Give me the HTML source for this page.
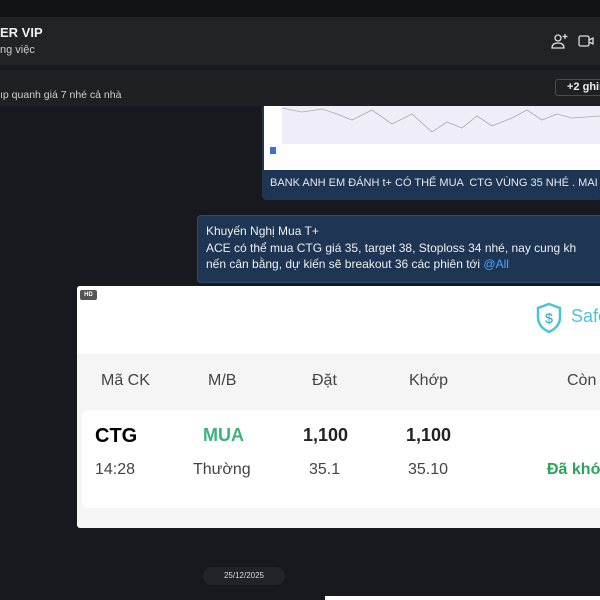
<!DOCTYPE html>
<html><head><meta charset="utf-8"><style>
*{margin:0;padding:0;box-sizing:border-box}
body{width:600px;height:600px;overflow:hidden;background:#17191e;font-family:"Liberation Sans",sans-serif;position:relative;color:#e6e6e6}
.a{position:absolute;white-space:nowrap}
</style></head><body>
<div class="a" style="left:0;top:0;width:600px;height:17px;background:#121316"></div>
<div class="a" style="left:0;top:17px;width:600px;height:48px;background:#222327"></div>
<div class="a" style="left:0;top:25px;font-size:13px;font-weight:bold;color:#f0f0f0">ER VIP</div>
<div class="a" style="left:0;top:44px;font-size:11px;color:#cfcfcf">ng việc</div>
<svg class="a" style="left:551px;top:33px" width="18" height="16" viewBox="0 0 18 16" fill="none" stroke="#ddd" stroke-width="1.3"><circle cx="7" cy="5" r="3"/><path d="M1 15c0-4 3-5 6-5s6 1 6 5z"/><path d="M14 1v5M11.5 3.5h5"/></svg>
<svg class="a" style="left:578px;top:34px" width="16" height="14" viewBox="0 0 16 14" fill="none" stroke="#ddd" stroke-width="1.3"><rect x="1" y="2" width="10" height="10" rx="1.5"/><path d="M11 6l4-2v6l-4-2"/></svg>
<div class="a" style="left:0;top:70px;width:600px;height:36px;background:#1f2024"></div>
<div class="a" style="left:0;top:89px;font-size:10.5px;color:#d0d0d0">ıp quanh giá 7 nhé cả nhà</div>
<div class="a" style="left:555px;top:79px;width:60px;height:17px;border:1px solid #4a4b50;border-radius:3px;font-size:11px;font-weight:bold;color:#eee;padding:1px 0 0 11px">+2 ghim</div>
<div class="a" style="left:262px;top:106px;width:340px;height:94px;background:#1e3553;border-radius:0 0 4px 4px"></div>
<div class="a" style="left:264px;top:106px;width:336px;height:64px;background:#fff"></div>
<div class="a" style="left:282px;top:106px;width:318px;height:38px;background:#efedf7"></div>
<svg class="a" style="left:282px;top:106px" width="318" height="38"><polyline fill="none" stroke="#aaa" stroke-width="0.8" points="0,2 20,6 40,3 55,8 70,14 90,4 110,18 130,8 150,26 165,16 180,22 195,10 210,20 230,12 245,4 260,14 275,8 290,12 318,10"/></svg>
<div class="a" style="left:270px;top:147px;width:6px;height:7px;background:#3a6fd8"></div>
<div class="a" style="left:270px;top:177px;font-size:11px;color:#e6eaf0">BANK ANH EM ĐÁNH t+ CÓ THỂ MUA &nbsp;CTG VÙNG 35 NHÉ . MAI DỄ</div>
<div class="a" style="left:197px;top:215px;width:410px;height:68px;background:#1e3553;border:1px solid #2e4a6c;border-radius:4px"></div>
<div class="a" style="left:206px;top:223px;font-size:12px;line-height:16.5px;color:#f0f0f0">Khuyến Nghị Mua T+<br>ACE có thể mua CTG giá 35, target 38, Stoploss 34 nhé, nay cung kh<br>nến cân bằng, dự kiến sẽ breakout 36 các phiên tới <span style="color:#4ba6ff">@All</span></div>
<div class="a" style="left:77px;top:286px;width:530px;height:242px;background:#f5f5f5;border-radius:3px;overflow:hidden;color:#333">
 <div class="a" style="left:0;top:0;width:530px;height:68px;background:#fff"></div>
 <div class="a" style="left:3px;top:4px;width:17px;height:10px;background:#555;border-radius:2px;font-size:6px;font-weight:bold;color:#fff;text-align:center;line-height:10px">HD</div>
 <svg class="a" style="left:458px;top:16px" width="28" height="32" viewBox="0 0 28 32"><path d="M14 2l11 4v9c0 8-5 12-11 15C8 27 3 23 3 15V6z" fill="none" stroke="#4cc3d9" stroke-width="2.5"/><text x="14" y="21" font-size="14" text-anchor="middle" fill="#2a9fc0" font-family="Liberation Sans">$</text></svg>
 <div class="a" style="left:494px;top:20px;font-size:18px;color:#4cc3d9">Safe</div>
 <div class="a" style="left:5px;top:124px;width:530px;height:98px;background:#fff;border-radius:6px"></div>
 <div class="a" style="top:86px;left:0;width:530px;font-size:16px;color:#444">
  <span class="a" style="left:24px">Mã CK</span><span class="a" style="left:131px">M/B</span><span class="a" style="left:235px">Đặt</span><span class="a" style="left:332px">Khớp</span><span class="a" style="left:490px">Còn</span></div>
 <div class="a" style="top:139px;left:0;width:530px;font-size:18px;font-weight:bold;color:#222">
  <span class="a" style="left:18px;font-size:20px;color:#000">CTG</span><span class="a" style="left:126px;color:#3cb37a">MUA</span><span class="a" style="left:226px">1,100</span><span class="a" style="left:329px">1,100</span></div>
 <div class="a" style="top:175px;left:0;width:530px;font-size:16px;color:#444">
  <span class="a" style="left:18px">14:28</span><span class="a" style="left:116px">Thường</span><span class="a" style="left:232px">35.1</span><span class="a" style="left:331px">35.10</span><span class="a" style="left:470px;font-weight:bold;color:#2aa45a">Đã khớp</span></div>
</div>
<div class="a" style="left:203px;top:567px;width:82px;height:18px;background:#222328;border-radius:9px;font-size:8px;color:#ddd;text-align:center;line-height:18px">25/12/2025</div>
<div class="a" style="left:325px;top:596px;width:280px;height:4px;background:#fff"></div>
</body></html>
